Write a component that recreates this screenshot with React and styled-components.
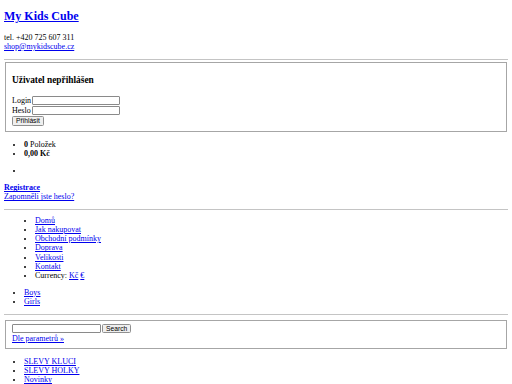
import React from 'react';
import styled, { createGlobalStyle } from 'styled-components';

const Global = createGlobalStyle`
  html, body { margin: 0; padding: 0; background: #fff; }
  body {
    font-family: "Liberation Serif", "Times New Roman", serif;
    font-size: 8px;
    line-height: 9.2px;
    color: #000;
  }
  a { color: #0000ee; }
`;

const Page = styled.div`
  padding: 0 4px 0 4px;
`;

const Title = styled.h2`
  margin: 10px 0 9px;
  font-size: 12px;
  line-height: 13.8px;
  font-weight: bold;
`;

const Contact = styled.p`
  margin: 0 0 8px;
`;

const Rule = styled.hr`
  margin: ${p => p.$mt}px 0 ${p => p.$mb}px;
  border: 0;
  border-top: 1px solid #c4c4c4;
  height: 0;
`;

const Box = styled.div`
  margin: 0 1px;
  border: 1px solid #a6a6a6;
  padding: 2.8px 6px 5px;
`;

const BoxTitle = styled.h3`
  margin: 9.4px 0 9.4px;
  font-size: 9.36px;
  line-height: 10.8px;
  font-weight: bold;
`;

const FieldRow = styled.div`
  display: flex;
  align-items: center;
  gap: 1px;
  height: 10px;
`;

const TextInput = styled.input`
  box-sizing: border-box;
  width: ${p => p.$w}px;
  height: 9.6px;
  margin: 0;
  padding: 0 1px;
  border: 1px solid #8a8a8a;
  border-radius: 1px;
  font-family: "Liberation Sans", Arial, sans-serif;
  font-size: 6.7px;
  background: #fff;
`;

const Button = styled.button`
  box-sizing: border-box;
  height: ${p => p.$h || 9.6}px;
  margin: ${p => p.$mt || 0}px 0 0;
  padding: 0 3px;
  border: 1px solid #8f8f8f;
  border-radius: 1.5px;
  background: #efefef;
  font-family: "Liberation Sans", Arial, sans-serif;
  font-size: 6.7px;
  line-height: 7px;
  color: #000;
`;

const List = styled.ul`
  margin: ${p => p.$mt ?? 8}px 0 ${p => p.$mb ?? 8}px;
  padding-left: ${p => p.$pl || 20}px;
  list-style: disc;
  li::marker { font-size: 8px; }
`;

const LinkBlock = styled.p`
  margin: 8px 0 7px;
`;

const SearchRow = styled.div`
  display: flex;
  align-items: center;
  gap: 1px;
  height: 10.5px;
`;

export default function App() {
  return (
    <>
      <Global />
      <Page>
        <Title><a href="#">My Kids Cube</a></Title>
        <Contact>
          tel. +420 725 607 311<br />
          <a href="#">shop@mykidscube.cz</a>
        </Contact>
        <Rule $mt={0} $mb={2} />
        <Box>
          <BoxTitle>Uživatel nepřihlášen</BoxTitle>
          <FieldRow>Login <TextInput $w={88} /></FieldRow>
          <FieldRow>Heslo <TextInput $w={88} /></FieldRow>
          <Button $mt={0.5}>Přihlásit</Button>
        </Box>
        <List>
          <li><b>0</b> Položek</li>
          <li><b>0,00 Kč</b></li>
        </List>
        <List>
          <li>{'\u00a0'}</li>
        </List>
        <LinkBlock>
          <a href="#"><b>Registrace</b></a><br />
          <a href="#">Zapomněli jste heslo?</a>
        </LinkBlock>
        <Rule $mt={0} $mb={6} />
        <List $mt={0} $pl={31}>
          <li><a href="#">Domů</a></li>
          <li><a href="#">Jak nakupovat</a></li>
          <li><a href="#">Obchodní podmínky</a></li>
          <li><a href="#">Doprava</a></li>
          <li><a href="#">Velikosti</a></li>
          <li><a href="#">Kontakt</a></li>
          <li>Currency: <a href="#">Kč</a> <a href="#">€</a></li>
        </List>
        <List $mb={7}>
          <li><a href="#">Boys</a></li>
          <li><a href="#">Girls</a></li>
        </List>
        <Rule $mt={0} $mb={5} />
        <Box>
          <SearchRow>
            <TextInput $w={89} />
            <Button>Search</Button>
          </SearchRow>
          <a href="#">Dle parametrů »</a>
        </Box>
        <List>
          <li><a href="#">SLEVY KLUCI</a></li>
          <li><a href="#">SLEVY HOLKY</a></li>
          <li><a href="#">Novinky</a></li>
        </List>
      </Page>
    </>
  );
}
